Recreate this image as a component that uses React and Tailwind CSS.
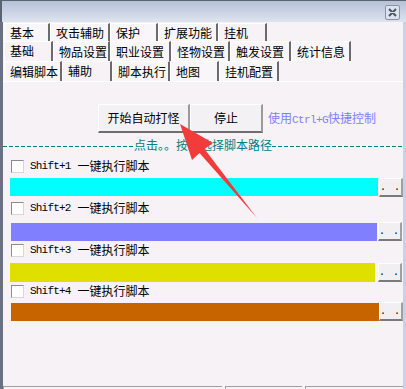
const row1 = [["基本", 46], ["攻击辅助", 60], ["保护", 48], ["扩展功能", 60], ["挂机", 49, true]];
const row2 = [["基础", 49, true], ["物品设置", 57], ["职业设置", 61], ["怪物设置", 59], ["触发设置", 61], ["统计信息", 60]];
const row3 = [["编辑脚本", 58], ["辅助", 50, true], ["脚本执行", 58], ["地图", 49], ["挂机配置", 60]];

function TabRow({ tabs, h }) {
  return (
    <div className="flex pl-[1px]" style={{ height: h }}>
      {tabs.map(([t, w, sel]) => (
        <div
          key={t}
          style={{ width: w }}
          className={
            "flex h-full pl-[5px] border-l border-l-white border-r-2 border-r-[#6b6b6b] text-[12px] text-black " +
            (sel ? "items-start pt-[1px] bg-[#f6f2f6] border-t border-t-white" : "items-center bg-[#f9f6f9] border-t border-t-white")
          }
        >
          <span className="leading-[15px]">{t}</span>
        </div>
      ))}
    </div>
  );
}

function Dots() {
  return (
    <div className="w-[24px] h-[19px] bg-[#f2eff2] border-t border-l border-t-white border-l-white border-b-2 border-r-2 border-b-[#7a7a7a] border-r-[#a0a0a0] flex items-end justify-center pb-[2px]">
      <span className="text-[10px] leading-[10px] font-['Liberation_Mono',monospace] tracking-[1px]">. .</span>
    </div>
  );
}

function Check({ label }) {
  return (
    <div className="flex items-center h-[16px] pl-[8px]">
      <div className="w-[13px] h-[13px] bg-white border border-t-[#8c8c8c] border-l-[#8c8c8c] border-b-[#d8d8d8] border-r-[#d8d8d8]" />
      <span className="ml-[6px] text-[11px] tracking-[-0.8px] font-['Liberation_Mono',monospace] text-black">{label}</span>
      <span className="ml-[7px] text-[12px] text-black">一键执行脚本</span>
    </div>
  );
}

function Bar({ color, ml, w, h, mt, bmt, gap }) {
  return (
    <div className="flex items-start" style={{ marginTop: mt }}>
      <div style={{ marginLeft: ml, width: w, height: h, background: color, marginTop: bmt }} />
      <div style={{ marginLeft: gap }}>
        <Dots />
      </div>
    </div>
  );
}

export default function App() {
  return (
    <div className="relative w-[406px] h-[389px] overflow-hidden bg-[#f6f2f6] font-['Noto_Sans_CJK_SC',sans-serif]">
      {/* title bar */}
      <div className="h-[22px] border-t border-t-[#5b6373] border-l-2 border-l-[#5b6373] bg-gradient-to-b from-[#b5c1d6] to-[#dde4ef] flex justify-end items-start pr-[6px] pt-[4px]">
        <div className="w-[15px] h-[15px] rounded-[2px] border border-[#8792a8] bg-[#dde3ec] flex items-center justify-center">
          <svg width="9" height="9" viewBox="0 0 9 9">
            <path d="M1 1 L8 8 M8 1 L1 8" stroke="#4a5468" strokeWidth="2" />
            <path d="M1 4.5 H8" stroke="#dde3ec" strokeWidth="1" />
          </svg>
        </div>
      </div>
      {/* body */}
      <div className="h-[367px] border-l-[3px] border-l-[#6a7182] border-r-[3px] border-r-[#c9d2e3] flex flex-col">
        <div className="pt-[1px]" />
        <TabRow tabs={row1} h={18} />
        <TabRow tabs={row2} h={20} />
        <TabRow tabs={row3} h={20} />
        <div className="flex-1 border-t border-t-white flex flex-col">
          {/* buttons */}
          <div className="flex items-center mt-[22px] h-[29px]">
            <div className="ml-[95px] w-[92px] h-[29px] bg-[#f4f1f4] border-t border-l border-t-white border-l-white border-b-2 border-r-2 border-b-[#6e6e6e] border-r-[#9a9a9a] flex items-center justify-center text-[12px] text-black">
              开始自动打怪
            </div>
            <div className="w-[73px] h-[29px] bg-[#f4f1f4] border-t border-l border-t-white border-l-white border-b-2 border-r-2 border-b-[#6e6e6e] border-r-[#9a9a9a] flex items-center justify-center text-[12px] text-black">
              停止
            </div>
            <span className="ml-[5px] text-[12px] text-[#8080ff]">
              使用<span className="font-['Liberation_Mono',monospace] text-[11px] tracking-[-0.6px]">Ctrl+G</span>快捷控制
            </span>
          </div>
          {/* dashed line */}
          <div className="flex items-center h-[16px] mt-[4px] text-[#008080] text-[12px] whitespace-nowrap">
            <div className="flex-1 h-[1px] mt-[2px] bg-[repeating-linear-gradient(90deg,#008080_0px,#008080_4px,transparent_4px,transparent_6px)]" />
            <span>点击。。按钮选择脚本路径</span>
            <div className="flex-1 h-[1px] mt-[2px] bg-[repeating-linear-gradient(90deg,#008080_0px,#008080_4px,transparent_4px,transparent_6px)]" />
          </div>
          <div className="mt-[5px]"><Check label="Shift+1" /></div>
          <Bar color="#00ffff" ml={7} w={368} h={18} mt={4} bmt={0} gap={1} />
          <div className="mt-[3px]"><Check label="Shift+2" /></div>
          <Bar color="#8080ff" ml={8} w={366} h={18} mt={6} bmt={1} gap={1} />
          <div className="mt-[1px]"><Check label="Shift+3" /></div>
          <Bar color="#dfdf00" ml={7} w={365} h={19} mt={5} bmt={0} gap={3} />
          <div className="mt-[1px]"><Check label="Shift+4" /></div>
          <Bar color="#c86400" ml={8} w={368} h={18} mt={3} bmt={1} gap={0} />
          <div className="flex-1" />
          {/* status bar tops */}
          <div className="flex h-[3px] gap-[3px]">
            <div className="w-[219px] border-t border-l border-t-[#a0a0a0] border-l-[#a0a0a0]" />
            <div className="w-[77px] border-t border-l border-t-[#a0a0a0] border-l-[#a0a0a0]" />
            <div className="flex-1 border-t border-l border-t-[#a0a0a0] border-l-[#a0a0a0]" />
          </div>
        </div>
      </div>
      {/* red arrow annotation */}
      <svg className="absolute left-0 top-0 pointer-events-none" width="406" height="389" viewBox="0 0 406 389">
        <polygon
          points="180,124 213,143 204.5,149 257,218 199.5,153 192,160"
          fill="#f23c3c"
        />
      </svg>
    </div>
  );
}
